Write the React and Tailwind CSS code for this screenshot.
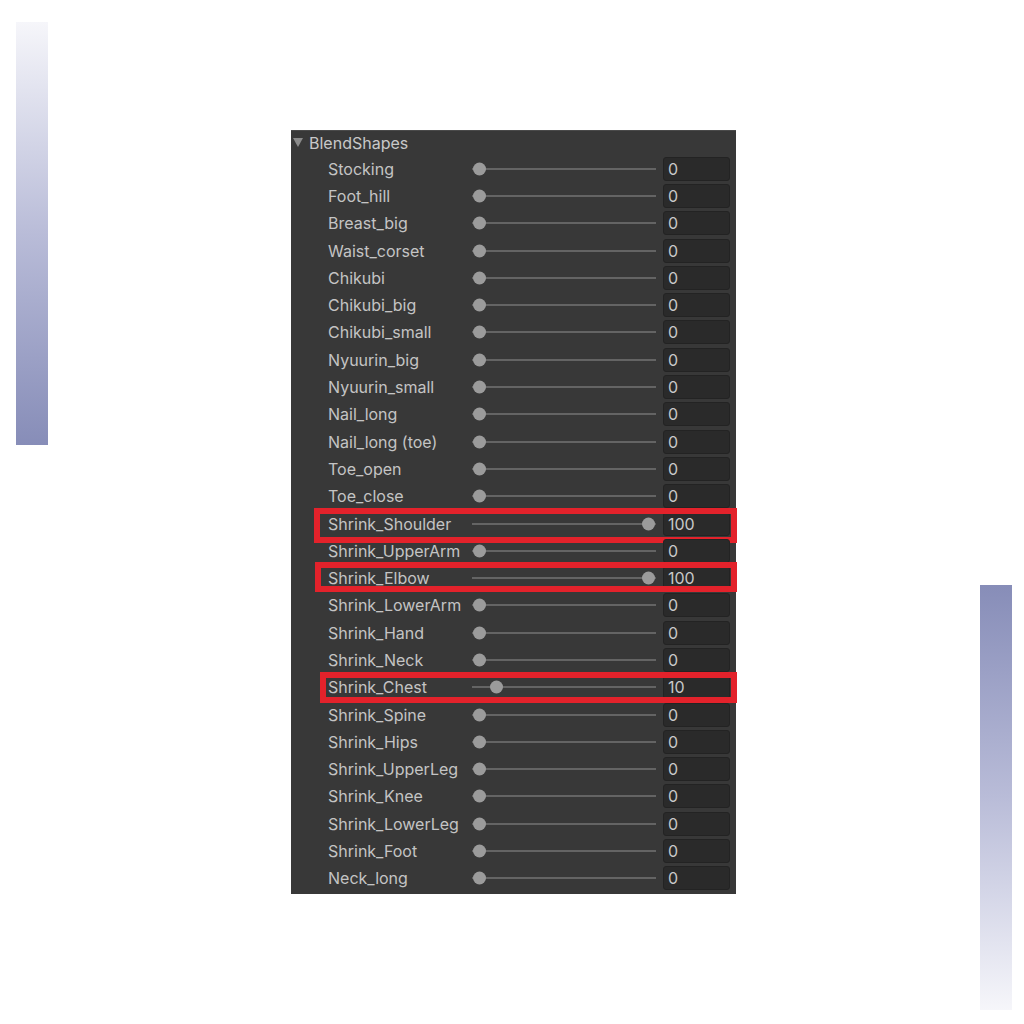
const shapes = [
  ["Stocking", 0],
  ["Foot_hill", 0],
  ["Breast_big", 0],
  ["Waist_corset", 0],
  ["Chikubi", 0],
  ["Chikubi_big", 0],
  ["Chikubi_small", 0],
  ["Nyuurin_big", 0],
  ["Nyuurin_small", 0],
  ["Nail_long", 0],
  ["Nail_long (toe)", 0],
  ["Toe_open", 0],
  ["Toe_close", 0],
  ["Shrink_Shoulder", 100, "shoulder"],
  ["Shrink_UpperArm", 0],
  ["Shrink_Elbow", 100, "elbow"],
  ["Shrink_LowerArm", 0],
  ["Shrink_Hand", 0],
  ["Shrink_Neck", 0],
  ["Shrink_Chest", 10, "chest"],
  ["Shrink_Spine", 0],
  ["Shrink_Hips", 0],
  ["Shrink_UpperLeg", 0],
  ["Shrink_Knee", 0],
  ["Shrink_LowerLeg", 0],
  ["Shrink_Foot", 0],
  ["Neck_long", 0],
];

// red annotation frames, offsets relative to the row
const marks = {
  shoulder: "left-[23px] -right-[1px] -top-[2px] h-[35px]",
  elbow: "left-[24px] -right-[1px] -top-[2px] h-[30px]",
  chest: "left-[29px] -right-[1px] -top-[2px] h-[31px]",
};

function Slider({ value }) {
  return (
    <div className="relative w-[184px] h-full ml-[181px] shrink-0">
      <div className="absolute left-0 right-0 top-1/2 -translate-y-1/2 h-[2px] bg-[#646464]" />
      <div
        className="absolute top-1/2 -translate-y-1/2 w-[13px] h-[13px] rounded-full bg-[#9b9b9b]"
        style={{ left: `${1 + value * 1.69}px` }}
      />
    </div>
  );
}

function Row({ name, value, mark }) {
  return (
    <div className="relative flex items-center h-[27.3px]">
      <span className="absolute left-[37px] text-[16px] text-[#c4c4c4]">{name}</span>
      <Slider value={value} />
      <div className="ml-[7px] w-[67px] h-[24px] rounded-[3px] bg-[#2a2a2a] border border-[#232323] flex items-center pl-[4px] text-[16px] text-[#c8c8c8]">
        {value}
      </div>
      {mark && (
        <div className={`absolute border-[6px] border-[#e3222b] ${marks[mark]}`} />
      )}
    </div>
  );
}

export default function App() {
  return (
    <div className="w-[1024px] h-[1024px] bg-white flex" style={{ fontFamily: "Inter, 'Noto Sans', sans-serif" }}>
      <div className="ml-[16px] mt-[22px] w-[32px] h-[423px] bg-gradient-to-b from-[#f6f6fa] via-[#b9bcd8] to-[#878db8]" />
      <div className="ml-[243px] mt-[130px] w-[445px] h-[764px] bg-[#383838] border-t border-[#4a4a4a] shrink-0">
        <div className="flex items-center h-[23px] pl-[2px]">
          <svg width="10" height="9" viewBox="0 0 10 9" className="mr-[6px]">
            <path d="M0 0 L10 0 L5 9 Z" fill="#8a8a8a" />
          </svg>
          <span className="text-[16px] text-[#c8c8c8]">BlendShapes</span>
        </div>
        <div className="pt-[1px]">
          {shapes.map(([name, value, mark]) => (
            <Row key={name} name={name} value={value} mark={mark} />
          ))}
        </div>
      </div>
      <div className="ml-[244px] mt-[585px] w-[32px] h-[425px] bg-gradient-to-b from-[#878db8] via-[#b9bcd8] to-[#f6f6fa]" />
    </div>
  );
}
